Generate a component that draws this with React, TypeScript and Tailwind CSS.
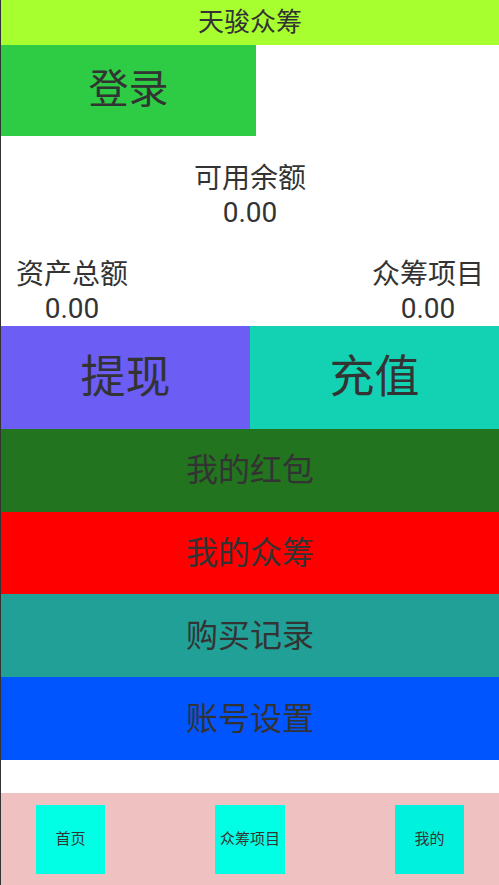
import React from "react";

const font = { fontFamily: 'Roboto, "Noto Sans CJK SC", sans-serif' };

export default function App() {
  const menu = [
    { label: "我的红包", bg: "bg-[#22741e]" },
    { label: "我的众筹", bg: "bg-[#ff0000]" },
    { label: "购买记录", bg: "bg-[#20a096]" },
    { label: "账号设置", bg: "bg-[#0055ff]" },
  ];
  return (
    <div
      className="w-[499px] h-[885px] border-l border-[#333333] bg-white text-[#333333] flex flex-col overflow-hidden font-['Roboto','Noto_Sans_CJK_SC',sans-serif]"
      style={font}
    >
      <div className="h-[45px] bg-[#a8ff2f] flex items-center justify-center text-[26px] leading-none">
        天骏众筹
      </div>
      <div className="h-[91px] w-[255px] bg-[#2ecc45] flex items-center justify-center text-[40px] leading-none">
        登录
      </div>
      <div className="flex flex-col items-center pt-[26px] text-[28px] leading-[34px]">
        <div>可用余额</div>
        <div>0.00</div>
      </div>
      <div className="flex justify-between mt-[28px] px-[15px] text-[28px] leading-[34px]">
        <div className="flex flex-col items-center">
          <div>资产总额</div>
          <div>0.00</div>
        </div>
        <div className="flex flex-col items-center">
          <div>众筹项目</div>
          <div>0.00</div>
        </div>
      </div>
      <div className="flex h-[103px]">
        <div className="flex-1 bg-[#6c5ef5] flex items-center justify-center text-[45px] leading-none">
          提现
        </div>
        <div className="flex-1 bg-[#13d1b3] flex items-center justify-center text-[45px] leading-none">
          充值
        </div>
      </div>
      {menu.map((m) => (
        <div
          key={m.label}
          className={`h-[83px] ${m.bg} flex items-center justify-center text-[32px] leading-none`}
        >
          {m.label}
        </div>
      ))}
      <div className="h-[33px]" />
      <div className="h-[92px] bg-[#f0c1c1] flex items-center justify-between px-[35px] text-[15px] leading-none">
        <div className="w-[69px] h-[69px] bg-[#00ffe5] flex items-center justify-center">首页</div>
        <div className="w-[70px] h-[69px] bg-[#00ffe5] flex items-center justify-center whitespace-nowrap">众筹项目</div>
        <div className="w-[69px] h-[69px] bg-[#00f2de] flex items-center justify-center">我的</div>
      </div>
    </div>
  );
}
